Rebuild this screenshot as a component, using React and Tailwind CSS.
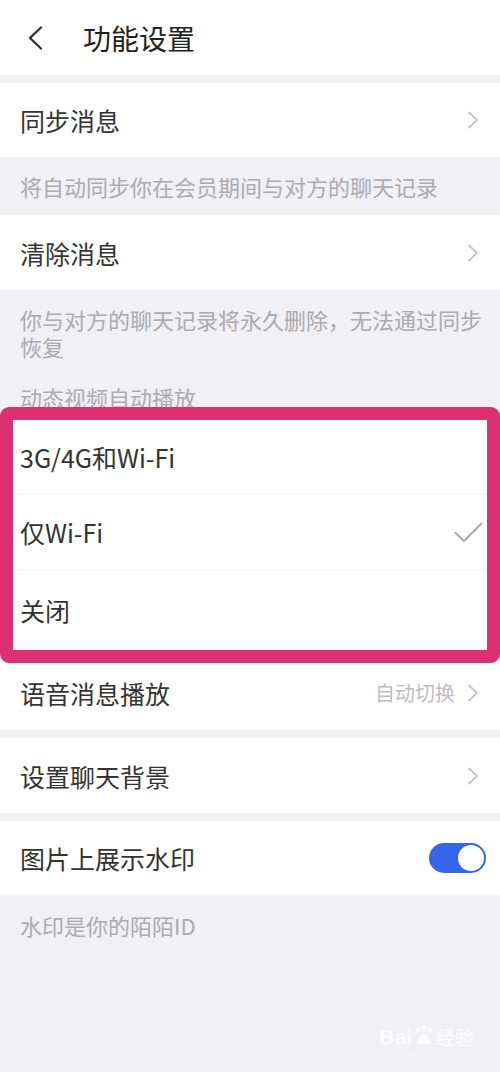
import { useState } from "react";

const font = { fontFamily: '"Noto Sans CJK SC", "Noto Sans", sans-serif' };

function Chevron() {
  return (
    <svg width="12" height="18" viewBox="0 0 12 18" fill="none">
      <path d="M2 1.5 L10 9 L2 16.5" stroke="#c6c6ca" strokeWidth="1.8" strokeLinecap="round" strokeLinejoin="round" />
    </svg>
  );
}

function Row({ title, value, arrow = true, className = "h-[75px]", pr = "pr-[21px]", children }) {
  return (
    <div className={`flex items-center justify-between bg-white pl-5 ${pr} ${className}`}>
      <span className="text-[25px] leading-[30px] text-[#333333]">{title}</span>
      <div className="flex items-center gap-3">
        {value && <span className="text-[20px] leading-[26px] text-[#bdbdc0]">{value}</span>}
        {arrow && <Chevron />}
        {children}
      </div>
    </div>
  );
}

function Caption({ children, className = "" }) {
  return <p className={`pl-5 pr-2 text-[22px] leading-[27px] text-[#ababb0] ${className}`}>{children}</p>;
}

export default function App() {
  const [mode, setMode] = useState("wifi");
  const [watermark, setWatermark] = useState(true);

  const options = [
    { id: "all", label: "3G/4G和Wi-Fi", h: "h-[75px]" },
    { id: "wifi", label: "仅Wi-Fi", h: "h-[75px]" },
    { id: "off", label: "关闭", h: "h-[80px]" },
  ];

  return (
    <div className="relative min-h-[1072px] w-[500px] bg-[#f0f0f5]" style={font}>
      {/* header */}
      <div className="flex h-[75px] items-center bg-white">
        <button className="ml-[27px] flex h-[26px] w-[18px] items-center">
          <svg width="17" height="24" viewBox="0 0 17 24" fill="none">
            <path d="M14 1.5 L3 12 L14 22.5" stroke="#2a2a2a" strokeWidth="2.2" strokeLinecap="round" strokeLinejoin="round" />
          </svg>
        </button>
        <h1 className="ml-[38px] text-[28px] leading-[34px] text-[#222222]">功能设置</h1>
      </div>

      <div className="h-2" />
      <Row title="同步消息" className="h-[74px]" />
      <div className="flex h-[58px] items-center">
        <Caption>将自动同步你在会员期间与对方的聊天记录</Caption>
      </div>
      <Row title="清除消息" />

      <div className="h-[117px] overflow-hidden pt-4">
        <Caption>你与对方的聊天记录将永久删除，无法通过同步恢复</Caption>
        <Caption className="mt-[24px]">动态视频自动播放</Caption>
      </div>

      {/* highlighted group */}
      <div className="rounded-[9px] border-[13px] border-[#dd3070] bg-white">
        {options.map((o, i) => (
          <div
            key={o.id}
            onClick={() => setMode(o.id)}
            className={`flex items-center justify-between pl-[7px] pr-[4px] ${o.h} ${i < 2 ? "border-b border-[#f4f4f6]" : ""}`}
          >
            <span className="text-[25px] leading-[30px] text-[#333333]">{o.label}</span>
            {mode === o.id && (
              <svg width="29" height="21" viewBox="0 0 29 21" fill="none">
                <path d="M1.5 11 L10 19 L27.5 1.5" stroke="#a9a9ad" strokeWidth="2" strokeLinecap="round" strokeLinejoin="round" />
              </svg>
            )}
          </div>
        ))}
      </div>

      <Row title="语音消息播放" value="自动切换" className="h-[67px] pb-[7px]" />
      <div className="h-2" />
      <Row title="设置聊天背景" />
      <div className="h-2" />
      <Row title="图片上展示水印" arrow={false} className="h-[74px]" pr="pr-[14px]">
        <button
          onClick={() => setWatermark(!watermark)}
          className={`flex h-[30px] w-[57px] items-center rounded-full p-[2px] ${watermark ? "justify-end bg-[#3566ea]" : "justify-start bg-[#d9d9de]"}`}
        >
          <span className="h-[26px] w-[26px] rounded-full bg-white" />
        </button>
      </Row>
      <div className="flex h-[60px] items-center">
        <Caption>水印是你的陌陌ID</Caption>
      </div>

      {/* site watermark */}
      <div className="absolute bottom-[14px] right-[26px] flex flex-col items-center text-white/80">
        <div className="flex items-end text-[21px] font-bold leading-[22px]" style={{ fontFamily: '"Liberation Sans", sans-serif' }}>
          <span>Bai</span>
          <svg width="22" height="24" viewBox="0 0 22 24" className="mx-[1px]">
            <circle cx="5" cy="6" r="2.5" fill="white" fillOpacity="0.8" />
            <circle cx="11" cy="3" r="2.5" fill="white" fillOpacity="0.8" />
            <circle cx="17" cy="6" r="2.5" fill="white" fillOpacity="0.8" />
            <path d="M4 20 C4 14 8 11 11 11 C14 11 18 14 18 20 Z" fill="white" fillOpacity="0.8" />
          </svg>
          <span className="text-[19px] font-normal" style={font}>经验</span>
        </div>
        <span className="text-[7px] leading-[10px] text-white/60" style={{ fontFamily: '"Liberation Sans", sans-serif' }}>jingyan.baidu.com</span>
      </div>
    </div>
  );
}
